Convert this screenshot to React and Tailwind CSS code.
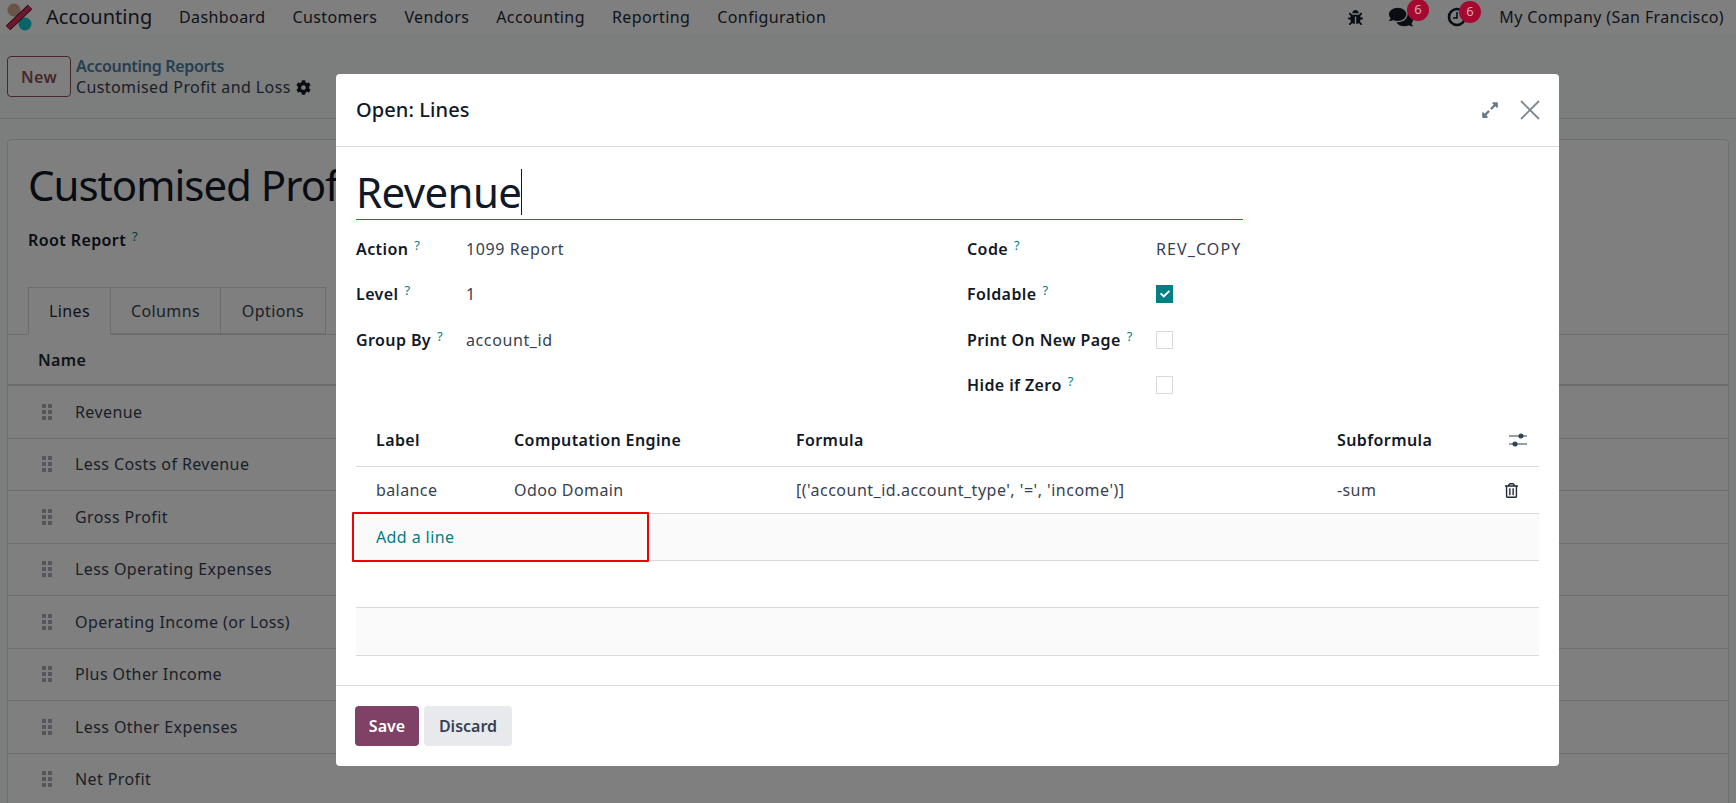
import React from "react";
import { FaBug, FaComments, FaCog, FaExpandAlt, FaCheck, FaRegTrashAlt } from "react-icons/fa";

function Logo() {
  return (
    <svg width="28" height="28" viewBox="0 0 28 28">
      <defs>
        <pattern id="dotsA" width="2" height="2" patternUnits="userSpaceOnUse">
          <rect width="2" height="2" fill="#dcb49c" />
          <circle cx="1" cy="1" r="0.5" fill="#a87c60" />
        </pattern>
        <pattern id="dotsB" width="2" height="2" patternUnits="userSpaceOnUse">
          <rect width="2" height="2" fill="#16d8e0" />
          <circle cx="1" cy="1" r="0.5" fill="#0a8a90" />
        </pattern>
      </defs>
      <circle cx="8" cy="7" r="6.5" fill="url(#dotsA)" />
      <circle cx="19" cy="21" r="6.5" fill="url(#dotsB)" />
      <path d="M2 25 L24 4" stroke="#3a1020" strokeWidth="6.5" />
      <path d="M2 25 L24 4" stroke="#e02f60" strokeWidth="4.5" />
    </svg>
  );
}
function Grip() {
  return (
    <svg width="12" height="16" viewBox="0 0 12 16" fill="#a8b0b8">
      {[0, 6, 12].map((y) => (
        <g key={y}>
          <rect x="1" y={y} width="4" height="4" />
          <rect x="7" y={y} width="4" height="4" />
        </g>
      ))}
    </svg>
  );
}
function Q() {
  return <sup className="text-[#017e84] font-normal text-[13px] ml-[6px] relative -top-[5px]">?</sup>;
}
function Field({ label, value, right, check, valueClass }) {
  return (
    <div className="flex items-center h-[45.5px]">
      <div className={`${right ? "w-[189px]" : "w-[110px]"} font-semibold text-[#111827]`}>
        {label}
        <Q />
      </div>
      {value ? <div className={`text-[#374151] ${valueClass || "tracking-[0.6px]"}`}>{value}</div> : null}
      {check === true ? (
        <div className="w-[17px] h-[18px] bg-[#017e84] flex items-center justify-center">
          <FaCheck size={10} color="#fff" />
        </div>
      ) : null}
      {check === false ? <div className="w-[17px] h-[18px] border border-[#d8dadd] bg-white" /> : null}
    </div>
  );
}
function Badge({ className }) {
  return (
    <span className={`absolute z-10 -top-[6px] w-[22px] h-[22px] rounded-full bg-[#a5092f] text-[#dca6b0] text-[13px] flex items-center justify-center ${className}`}>6</span>
  );
}

export default function App() {
  const rows = ["Revenue", "Less Costs of Revenue", "Gross Profit", "Less Operating Expenses", "Operating Income (or Loss)", "Plus Other Income", "Less Other Expenses", "Net Profit"];
  return (
    <div className="font-['Noto_Sans',sans-serif] relative w-[1736px] h-[803px] overflow-hidden bg-[#f9fafb] text-[16px] tracking-[0.4px] text-[#374151]">
      <header className="h-[34px] bg-white flex items-center text-[#1f2937]">
        <div className="ml-[6px] w-[40px]"><Logo /></div>
        <div className="text-[20px] w-[133px] tracking-[0.05px]">Accounting</div>
        <nav className="flex gap-[27px]">
          {["Dashboard", "Customers", "Vendors", "Accounting", "Reporting", "Configuration"].map((t) => (
            <span key={t}>{t}</span>
          ))}
        </nav>
        <div className="ml-auto flex items-center mr-[12px]">
          <span className="relative mr-[26px] text-[#111827]">
            <FaBug size={15} />
          </span>
          <span className="relative mr-[34px] text-[#111827]">
            <FaComments size={24} />
            <Badge className="left-[18px]" />
          </span>
          <span className="relative mr-[32px]">
            <svg width="20" height="20" viewBox="0 0 20 20" fill="none" stroke="#111827" strokeWidth="2.6" className="block"><circle cx="10" cy="10" r="8" /><path d="M10 5v6H6" strokeWidth="1.6" /></svg>
            <Badge className="left-[12px]" />
          </span>
          <span>My Company (San Francisco)</span>
        </div>
      </header>

      <div className="h-[85px] px-[7px] pt-[22px] flex gap-[5px] border-b border-[#d8dadd] box-border">
        <button className="h-[41px] w-[64px] border border-[#8f5058] rounded-[4px] text-[#8f5058] font-semibold bg-white">New</button>
        <div className="leading-[21px]">
          <div className="text-[#4a7fa5] font-semibold tracking-[-0.3px]">Accounting Reports</div>
          <div className="flex items-center gap-[5px]">Customised Profit and Loss
            <FaCog size={15} color="#111827" />
          </div>
        </div>
      </div>

      <main className="mx-[7px] mt-[20px] bg-white border border-[#d8dadd] rounded-[4px]">
        <div className="pl-[20px] pt-[18px]">
          <h1 className="text-[42px] leading-[54px] text-[#111827] tracking-[-1px]">Customised Profit and Loss</h1>
          <div className="mt-[16px] font-semibold text-[#111827]">Root Report<Q /></div>
        </div>
        <div className="mt-[35px] flex pl-[20px] border-b border-[#d8dadd] h-[48px]">
          <div className="w-[83px] h-[48px] border border-[#d8dadd] border-b-white bg-white flex items-center justify-center text-[#1f2937]">Lines</div>
          <div className="w-[110px] h-[47px] border-y border-r border-[#d8dadd] flex items-center justify-center">Columns</div>
          <div className="w-[105px] h-[47px] border-y border-r border-[#d8dadd] flex items-center justify-center">Options</div>
        </div>
        <div className="h-[51px] flex items-center pl-[30px] font-semibold border-b-2 border-[#d8dadd] text-[#1f2937]">Name</div>
        {rows.map((r) => (
          <div key={r} className="h-[52.5px] flex items-center border-b border-[#d8dadd] pl-[33px] box-border">
            <Grip />
            <span className="ml-[22px]">{r}</span>
          </div>
        ))}
      </main>

      <div className="absolute inset-0 bg-black/50" />

      <div className="absolute z-20 left-[336px] top-[74px] w-[1223px] h-[692px] bg-white rounded-[4px] flex flex-col">
        <div className="h-[73px] flex items-center border-b border-[#d8dadd] pl-[20px] pr-[19px]">
          <div className="text-[20px] font-medium text-[#111827] tracking-[0.1px]">Open: Lines</div>
          <FaExpandAlt className="ml-auto" size={18} color="#6b7a85" />
          <svg className="ml-[21px]" width="20" height="20" viewBox="0 0 20 20" stroke="#7d8790" strokeWidth="1.8"><path d="M1 1l18 18M19 1L1 19" /></svg>
        </div>
        <div className="px-[20px] flex-1 flex flex-col min-h-0">
          <div className="w-[887px] h-[73px] pt-[18px] border-b border-[#017e84] text-[42px] leading-[54px] text-[#111827] tracking-[-0.6px] flex items-center">
            Revenue<span className="w-px h-[46px] bg-[#111827]" />
          </div>
          <div className="flex mt-[6px]">
            <div className="w-[611px]">
              <Field label="Action" value="1099 Report" />
              <Field label="Level" value="1" />
              <Field label="Group By" value="account_id" />
            </div>
            <div>
              <Field right label="Code" value="REV_COPY" valueClass="tracking-[1.1px]" />
              <Field right label="Foldable" check={true} />
              <Field right label="Print On New Page" check={false} />
              <Field right label="Hide if Zero" check={false} />
            </div>
          </div>
          <div className="mt-[9px] relative">
            <div className="flex h-[50px] items-center pb-[3px] border-b border-[#d8dadd] font-semibold text-[#111827]">
              <div className="w-[158px] pl-[20px]">Label</div>
              <div className="w-[282px]">Computation Engine</div>
              <div className="w-[541px]">Formula</div>
              <div className="w-[172px]">Subformula</div>
              <svg width="18" height="16" viewBox="0 0 18 16" fill="#2f4256" stroke="#2f4256" strokeWidth="1.2"><path d="M0 4h18M0 12h18" /><circle cx="12" cy="4" r="2" /><circle cx="6" cy="12" r="2" /></svg>
            </div>
            <div className="flex h-[47px] items-center border-b border-[#d8dadd]">
              <div className="w-[158px] pl-[20px]">balance</div>
              <div className="w-[282px]">Odoo Domain</div>
              <div className="w-[541px] tracking-[0.5px]">[('account_id.account_type', '=', 'income')]</div>
              <div className="w-[167px]">-sum</div>
              <FaRegTrashAlt size={15} color="#1f2937" />
            </div>
            <div className="h-[47px] flex items-center pl-[20px] bg-[#fafafa] border-b border-[#d8dadd] text-[#017e84]">Add a line</div>
            <div className="h-[47px] border-b border-[#d8dadd]" />
            <div className="h-[48px] bg-[#fafafa] border-b border-[#d8dadd]" />
            <div className="absolute left-[-4px] top-[95px] w-[297px] h-[50px] border-2 border-[#f00000] rounded-[1px] pointer-events-none" />
          </div>
        </div>
        <div className="h-[81px] border-t border-[#d8dadd] pl-[19px] pt-[20px] flex gap-[5px]">
          <button className="w-[64px] h-[40px] rounded-[4px] bg-[#7f4165] text-white font-semibold tracking-normal">Save</button>
          <button className="w-[88px] h-[40px] rounded-[4px] bg-[#e7e9ed] text-[#374151] font-semibold tracking-normal">Discard</button>
        </div>
      </div>
    </div>
  );
}
